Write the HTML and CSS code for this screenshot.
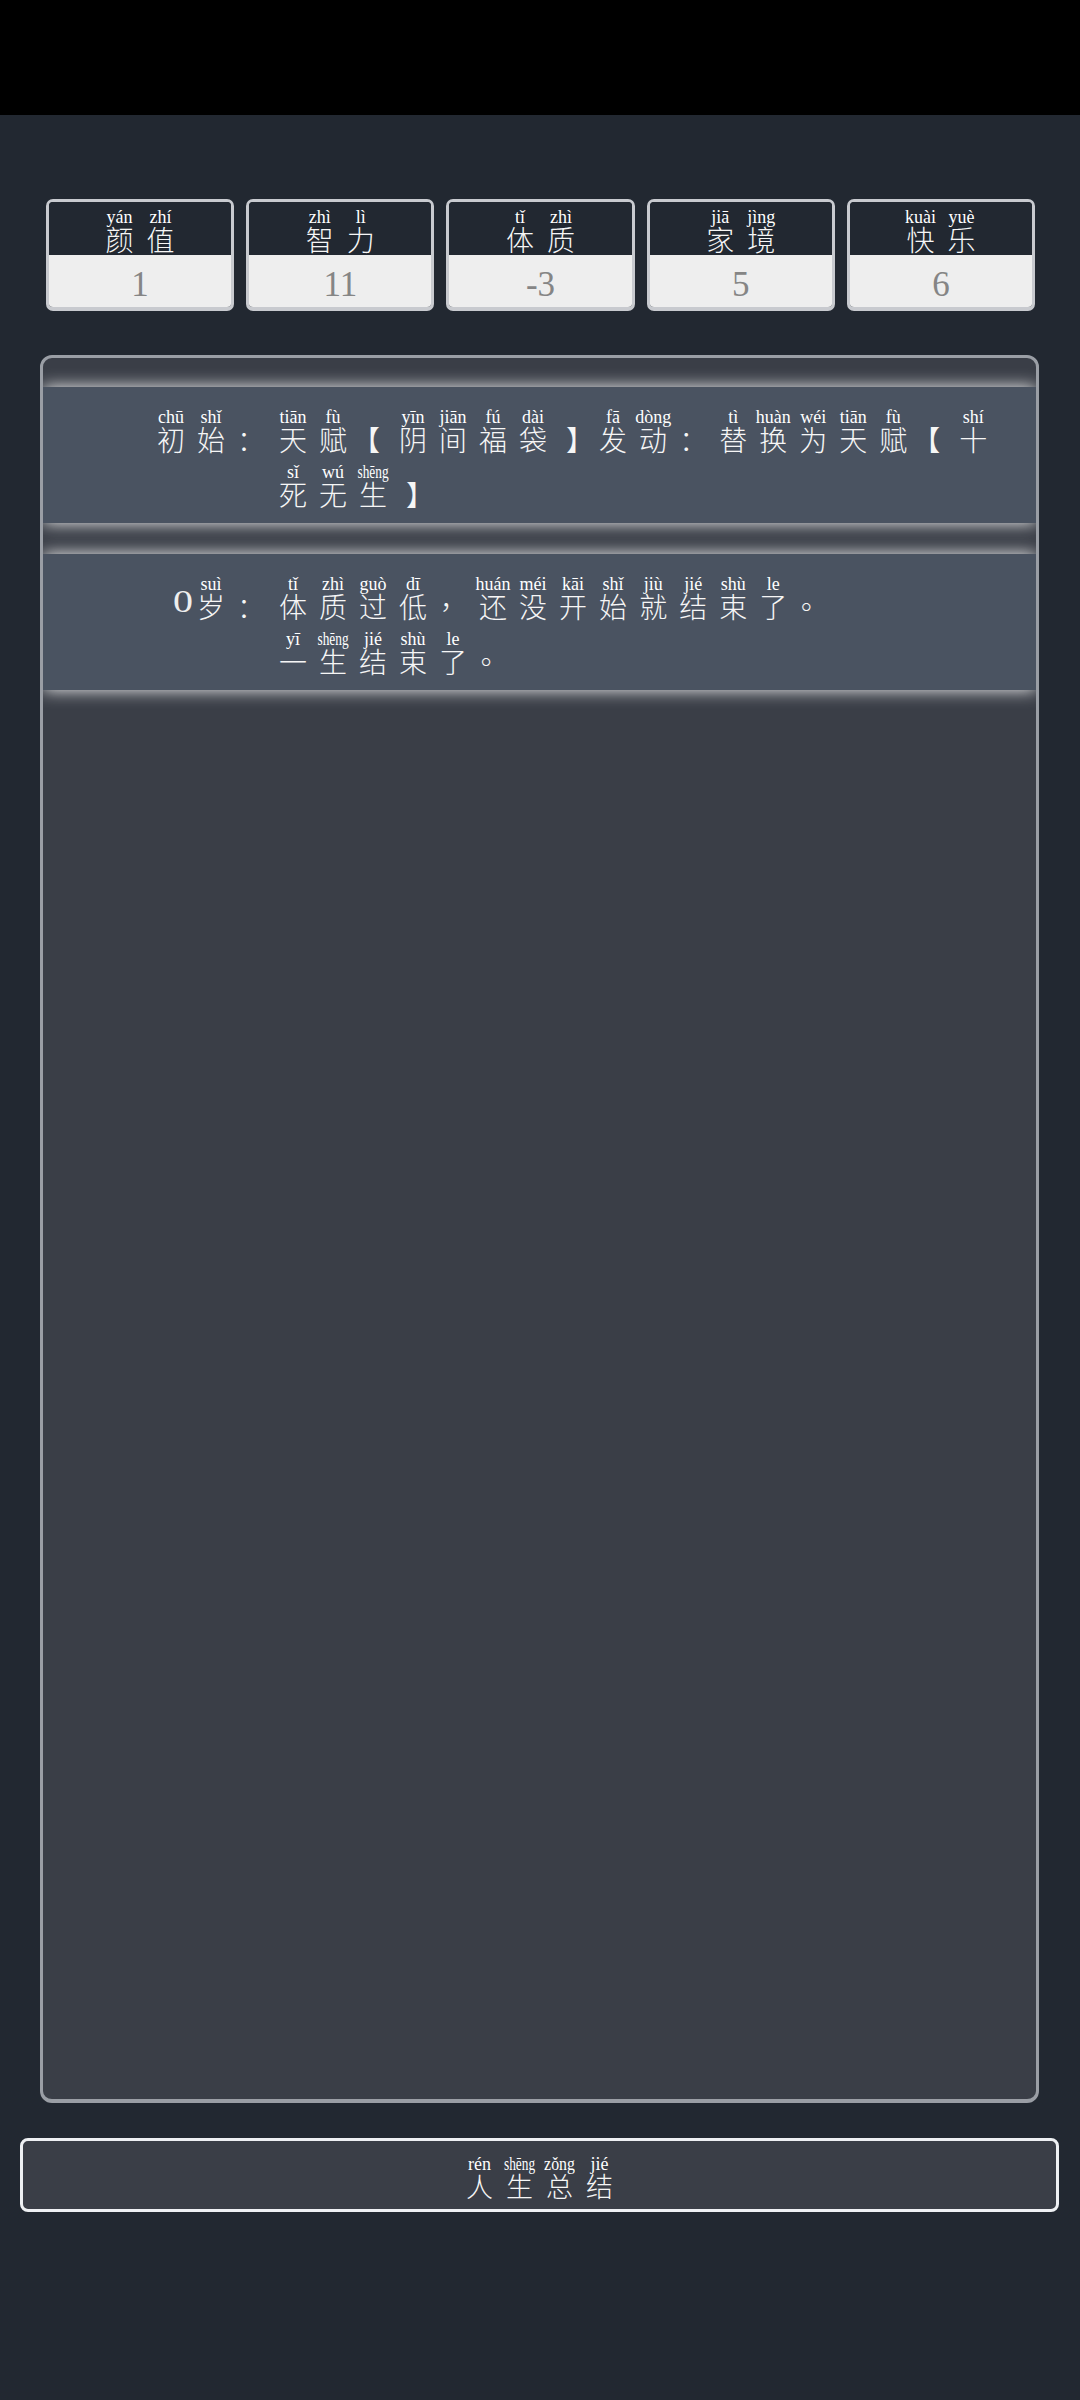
FILE: index.html
```html
<!DOCTYPE html>
<html lang="zh-CN">
<head>
<meta charset="utf-8">
<title>人生重开</title>
<link rel="stylesheet" href="styles.css">
</head>
<body>
<div class="statusbar"></div>

<div class="stats">
  <div class="card">
    <div class="card-head">
      <span class="r"><span class="py">yán</span><span class="hz">颜</span></span>
      <span class="r"><span class="py">zhí</span><span class="hz">值</span></span>
    </div>
    <div class="card-val">1</div>
  </div>
  <div class="card">
    <div class="card-head">
      <span class="r"><span class="py">zhì</span><span class="hz">智</span></span>
      <span class="r"><span class="py">lì</span><span class="hz">力</span></span>
    </div>
    <div class="card-val">11</div>
  </div>
  <div class="card">
    <div class="card-head">
      <span class="r"><span class="py">tǐ</span><span class="hz">体</span></span>
      <span class="r"><span class="py">zhì</span><span class="hz">质</span></span>
    </div>
    <div class="card-val">-3</div>
  </div>
  <div class="card">
    <div class="card-head">
      <span class="r"><span class="py">jiā</span><span class="hz">家</span></span>
      <span class="r"><span class="py">jìng</span><span class="hz">境</span></span>
    </div>
    <div class="card-val">5</div>
  </div>
  <div class="card">
    <div class="card-head">
      <span class="r"><span class="py">kuài</span><span class="hz">快</span></span>
      <span class="r"><span class="py">yuè</span><span class="hz">乐</span></span>
    </div>
    <div class="card-val">6</div>
  </div>
</div>

<div class="panel">
  <div class="entry">
    <div class="label">
      <span class="r"><span class="py">chū</span><span class="hz">初</span></span>
      <span class="r"><span class="py">shǐ</span><span class="hz">始</span></span>
      <span class="r"><span class="py"></span><span class="hz colon">：</span></span>
    </div>
    <div class="content">
      <div class="line">
        <span class="r"><span class="py">tiān</span><span class="hz">天</span></span>
        <span class="r"><span class="py">fù</span><span class="hz">赋</span></span>
        <span class="r"><span class="py"></span><span class="hz br">【</span></span>
        <span class="r"><span class="py">yīn</span><span class="hz">阴</span></span>
        <span class="r"><span class="py">jiān</span><span class="hz">间</span></span>
        <span class="r"><span class="py">fú</span><span class="hz">福</span></span>
        <span class="r"><span class="py">dài</span><span class="hz">袋</span></span>
        <span class="r"><span class="py"></span><span class="hz br">】</span></span>
        <span class="r"><span class="py">fā</span><span class="hz">发</span></span>
        <span class="r"><span class="py">dòng</span><span class="hz">动</span></span>
        <span class="r"><span class="py"></span><span class="hz colon">：</span></span>
        <span class="r"><span class="py">tì</span><span class="hz">替</span></span>
        <span class="r"><span class="py">huàn</span><span class="hz">换</span></span>
        <span class="r"><span class="py">wéi</span><span class="hz">为</span></span>
        <span class="r"><span class="py">tiān</span><span class="hz">天</span></span>
        <span class="r"><span class="py">fù</span><span class="hz">赋</span></span>
        <span class="r"><span class="py"></span><span class="hz br">【</span></span>
        <span class="r"><span class="py">shí</span><span class="hz">十</span></span>
        <span class="r"><span class="py">sǐ</span><span class="hz">死</span></span>
        <span class="r"><span class="py">wú</span><span class="hz">无</span></span>
        <span class="r"><span class="py c">shēng</span><span class="hz">生</span></span>
        <span class="r"><span class="py"></span><span class="hz br">】</span></span>
      </div>
    </div>
  </div>

  <div class="entry">
    <div class="label">
      <span class="r n"><span class="py"></span><span class="hz num">0</span></span>
      <span class="r"><span class="py">suì</span><span class="hz">岁</span></span>
      <span class="r"><span class="py"></span><span class="hz colon">：</span></span>
    </div>
    <div class="content">
      <div class="line">
        <span class="r"><span class="py">tǐ</span><span class="hz">体</span></span>
        <span class="r"><span class="py">zhì</span><span class="hz">质</span></span>
        <span class="r"><span class="py">guò</span><span class="hz">过</span></span>
        <span class="r"><span class="py">dī</span><span class="hz">低</span></span>
        <span class="r"><span class="py"></span><span class="hz pt">，</span></span>
        <span class="r"><span class="py">huán</span><span class="hz">还</span></span>
        <span class="r"><span class="py">méi</span><span class="hz">没</span></span>
        <span class="r"><span class="py">kāi</span><span class="hz">开</span></span>
        <span class="r"><span class="py">shǐ</span><span class="hz">始</span></span>
        <span class="r"><span class="py">jiù</span><span class="hz">就</span></span>
        <span class="r"><span class="py">jié</span><span class="hz">结</span></span>
        <span class="r"><span class="py">shù</span><span class="hz">束</span></span>
        <span class="r"><span class="py">le</span><span class="hz">了</span></span>
        <span class="r"><span class="py"></span><span class="hz pt">。</span></span>
      </div>
      <div class="line">
        <span class="r"><span class="py">yī</span><span class="hz">一</span></span>
        <span class="r"><span class="py c">shēng</span><span class="hz">生</span></span>
        <span class="r"><span class="py">jié</span><span class="hz">结</span></span>
        <span class="r"><span class="py">shù</span><span class="hz">束</span></span>
        <span class="r"><span class="py">le</span><span class="hz">了</span></span>
        <span class="r"><span class="py"></span><span class="hz pt">。</span></span>
      </div>
    </div>
  </div>
</div>

<div class="summary-btn">
  <span class="r"><span class="py">rén</span><span class="hz">人</span></span>
  <span class="r"><span class="py c">shēng</span><span class="hz">生</span></span>
  <span class="r"><span class="py c2">zǒng</span><span class="hz">总</span></span>
  <span class="r"><span class="py">jié</span><span class="hz">结</span></span>
</div>
</body>
</html>
```

FILE: styles.css
```css
html, body {
  margin: 0;
  padding: 0;
  background: #222831;
}

body {
  width: 1080px;
  min-height: 2400px;
  font-family: "Noto Sans CJK SC", sans-serif;
  color: #f2f2f2;
}

.statusbar {
  height: 115px;
  background: #000;
}

/* ---------- ruby-like glyph units ---------- */
.r {
  display: flex;
  flex-direction: column;
  align-items: stretch;
  padding-bottom: 11px;
}

.py {
  contain: inline-size;
  display: flex;
  justify-content: center;
  height: 16px;
  line-height: 16px;
  white-space: nowrap;
  font-family: "Liberation Serif", serif;
  font-size: 18px;
  color: #ffffff;
}

.py.c {
  transform: scaleX(0.74);
}

.py.c2 {
  transform: scaleX(0.88);
}

.hz {
  font-family: "Noto Sans CJK SC", sans-serif;
  font-weight: 300;
  font-size: 28px;
  line-height: 28px;
  height: 28px;
  white-space: nowrap;
  color: #f6f6f6;
}

/* brackets: half-width glyph, centred in a full cell */
.hz.br {
  min-width: 28px;
  text-align: center;
  font-weight: 400;
  font-feature-settings: "halt" 1;
}

/* comma / full stop: centred forms, half-width, at the start of the cell */
.hz.pt {
  min-width: 28px;
  text-align: left;
  font-family: "Noto Sans CJK TC", "Noto Sans CJK SC", sans-serif;
  font-feature-settings: "halt" 1;
}

.hz.num {
  font-family: "Liberation Serif", serif;
  font-weight: 400;
  font-size: 32px;
  line-height: 18px;
  color: #eeeeee;
  transform: scaleX(1.25);
}

.r.n {
  margin-right: -6px;
}

/* ---------- stat cards ---------- */
.stats {
  display: flex;
  gap: 12px;
  margin-top: 84px;
  padding: 0 45px 0 46px;
}

.card {
  flex: 1;
  height: 112px;
  box-sizing: border-box;
  border: 3px solid #c8cacf;
  border-bottom-width: 4px;
  border-radius: 7px;
  overflow: hidden;
  display: flex;
  flex-direction: column;
}

.card-head {
  height: 53px;
  flex-shrink: 0;
  box-sizing: border-box;
  padding-top: 7px;
  background: #222831;
  display: flex;
  justify-content: center;
  gap: 13px;
}

.card-head .r {
  padding-bottom: 0;
}

.card-val {
  flex: 1;
  background: #eeeeee;
  text-align: center;
  font-family: "Liberation Serif", serif;
  font-size: 35px;
  line-height: 43px;
  padding-top: 8px;
  color: #858585;
}

/* ---------- life log panel ---------- */
.panel {
  margin: 44px 41px 0 40px;
  height: 1748px;
  box-sizing: border-box;
  border: 3px solid #9a9ea5;
  border-bottom-width: 4px;
  border-radius: 12px;
  background: #3a3e47;
  padding-top: 29px;
  overflow: hidden;
  display: flex;
  flex-direction: column;
  gap: 31px;
}

.entry {
  display: flex;
  align-items: flex-start;
  padding: 22px 30px 4px 0;
  background: #4a5361;
  box-shadow: 0 0 16px rgba(255, 255, 255, 0.95);
}

.label {
  width: 222px;
  flex-shrink: 0;
  display: flex;
  justify-content: flex-end;
  gap: 12px;
}

.content {
  flex: 1;
  min-width: 0;
  margin-left: 14px;
}

.line {
  display: flex;
  flex-wrap: wrap;
  gap: 0 12px;
}

/* ---------- bottom button ---------- */
.summary-btn {
  margin: 35px 21px 0 20px;
  height: 74px;
  box-sizing: border-box;
  border: 3px solid #eef0f3;
  border-radius: 8px;
  background: #3a3e47;
  padding-top: 15px;
  display: flex;
  justify-content: center;
  gap: 13px;
}

.summary-btn .hz {
  font-size: 27px;
}

.summary-btn .r {
  padding-bottom: 0;
}
```
